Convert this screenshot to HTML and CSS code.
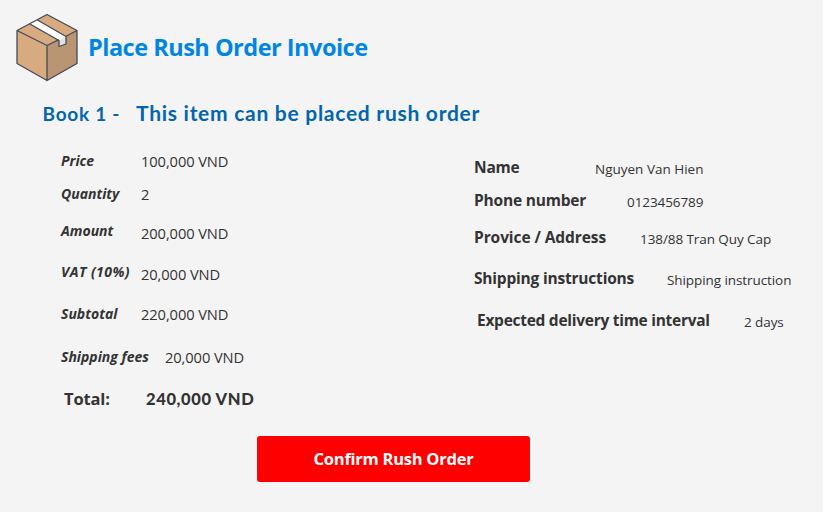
FILE: index.html
```
<!DOCTYPE html>
<html lang="en">
<head>
<meta charset="utf-8">
<title>Place Rush Order Invoice</title>
<link rel="stylesheet" href="styles.css">
</head>
<body>
<header class="header">
  <svg class="box-icon" viewBox="0 0 64 70" width="64" height="70" aria-hidden="true">
    <path d="M2 17.500 32 32.500V67.500L2 50.500Z" fill="#d7aa80"/>
    <path d="M32 32.500 62 17.500V50.500L32 67.500Z" fill="#ba9573"/>
    <path d="M2 17.500 32 1.500 62 17.500 32 32.500Z" fill="#d7aa80"/>
    <path d="M14.500 10.800 22 6.800 51 23.500V31L44.500 33.500V27.500Z" fill="#fff"/>
    <path d="M44 27.500 51 24V31L44 33.800Z" fill="#dfe1e4"/>
    <path d="M2 17.500 32 1.500 62 17.500V50.500L32 67.500 2 50.500ZL32 32.500 44 26.700M51 23.300 62 17.500M32 32.500V67.500M14.500 10.800 44 27.500V33.500L51 31V23.500L22 6.800" fill="none" stroke="#434b57" stroke-width="1.300" stroke-linejoin="round"/>
  </svg>
  <h1 class="title">Place Rush Order Invoice</h1>
</header>
<h2 class="item"><span class="item-name">Book 1 -</span><span class="item-status">This item can be placed rush order</span></h2>
<main class="details">
  <dl class="costs">
    <div class="row"><dt>Price</dt><dd>100,000 VND</dd></div>
    <div class="row"><dt>Quantity</dt><dd>2</dd></div>
    <div class="row low"><dt>Amount</dt><dd>200,000 VND</dd></div>
    <div class="row low"><dt class="vat">VAT (10%)</dt><dd>20,000 VND</dd></div>
    <div class="row"><dt>Subtotal</dt><dd>220,000 VND</dd></div>
    <div class="row fees"><dt>Shipping fees</dt><dd>20,000 VND</dd></div>
    <div class="row total"><dt>Total:</dt><dd>240,000 VND</dd></div>
  </dl>
  <dl class="delivery">
    <div class="row name"><dt>Name</dt><dd>Nguyen Van Hien</dd></div>
    <div class="row phone"><dt>Phone number</dt><dd>0123456789</dd></div>
    <div class="row address"><dt>Provice / Address</dt><dd>138/88 Tran Quy Cap</dd></div>
    <div class="row shipping"><dt>Shipping instructions</dt><dd>Shipping instruction</dd></div>
    <div class="row interval"><dt>Expected delivery time interval</dt><dd>2 days</dd></div>
  </dl>
</main>
<button class="confirm" type="button">Confirm Rush Order</button>
</body>
</html>
```

FILE: styles.css
```
* { box-sizing: border-box; margin: 0; padding: 0; }
body {
  height: 512px;
  overflow: hidden;
  background: #f4f4f4;
  color: #333;
  font-family: "Segoe UI", "Open Sans", sans-serif;
}
.header { display: flex; height: 95px; padding: 13px 0 0 15px; }
.box-icon { flex: none; margin-left: -0.5px; }
.title {
  margin: 18px 0 0 9.5px;
  color: #0085e5;
  font-size: 23.5px;
  line-height: 32px;
  letter-spacing: -0.5px;
  white-space: nowrap;
}
.item {
  display: flex;
  align-items: baseline;
  height: 55px;
  padding: 3px 0 0 42.5px;
  color: #0365b0;
  font-family: "Comic Sans MS", Lato, sans-serif;
  line-height: 30px;
  white-space: nowrap;
}
.item-name { width: 93.5px; font-size: 19px; letter-spacing: 0.75px; }
.item-status { font-size: 21px; letter-spacing: 0.73px; }
.details { display: grid; grid-template-columns: 413px 1fr; height: 286px; padding-left: 61px; }
.costs, .delivery { display: grid; align-content: start; }
.costs { grid-template-rows: 33px 37px 41px 42px 43px 42px 20px; padding-top: 1px; }
.delivery { grid-template-rows: 33px 37px 41px 42px 20px; padding-top: 7px; }
.row { display: grid; line-height: 20px; white-space: nowrap; }
.costs .row { grid-template-columns: 80px 1fr; }
.costs dt { font-size: 14px; font-style: italic; font-weight: 700; }
.costs dd { font-size: 14.7px; letter-spacing: -0.1px; }
.costs .vat { letter-spacing: 0.45px; }
.costs .low dd { padding-top: 2px; }
.costs .fees { grid-template-columns: 104px 1fr; }
.costs .total { grid-template-columns: 82px 1fr; padding-left: 3px; }
.costs .total dt { font-size: 16.5px; font-style: normal; letter-spacing: -0.15px; }
.costs .total dd {
  font-family: "Comic Sans MS", Lato, sans-serif;
  font-size: 16.5px;
  font-weight: 900;
  letter-spacing: 0.62px;
}
.delivery dt { font-size: 15.5px; font-weight: 700; letter-spacing: -0.2px; }
.delivery dd { padding-top: 2px; font-size: 13.5px; letter-spacing: -0.08px; }
.name { grid-template-columns: 121px 1fr; }
.delivery .name dd { letter-spacing: 0; }
.phone { grid-template-columns: 153px 1fr; }
.address { grid-template-columns: 166px 1fr; }
.delivery .address dt { letter-spacing: -0.08px; }
.shipping { grid-template-columns: 193px 1fr; }
.interval { grid-template-columns: 267px 1fr; padding-left: 3px; }
.delivery .interval dt { letter-spacing: -0.27px; }
.confirm {
  display: block;
  width: 273px;
  height: 46px;
  margin-left: 257px;
  border: 0;
  border-radius: 3px;
  background: #f00;
  color: #fff;
  font: 700 16.5px/46px "Segoe UI", "Open Sans", sans-serif;
  letter-spacing: -0.25px;
}
```
